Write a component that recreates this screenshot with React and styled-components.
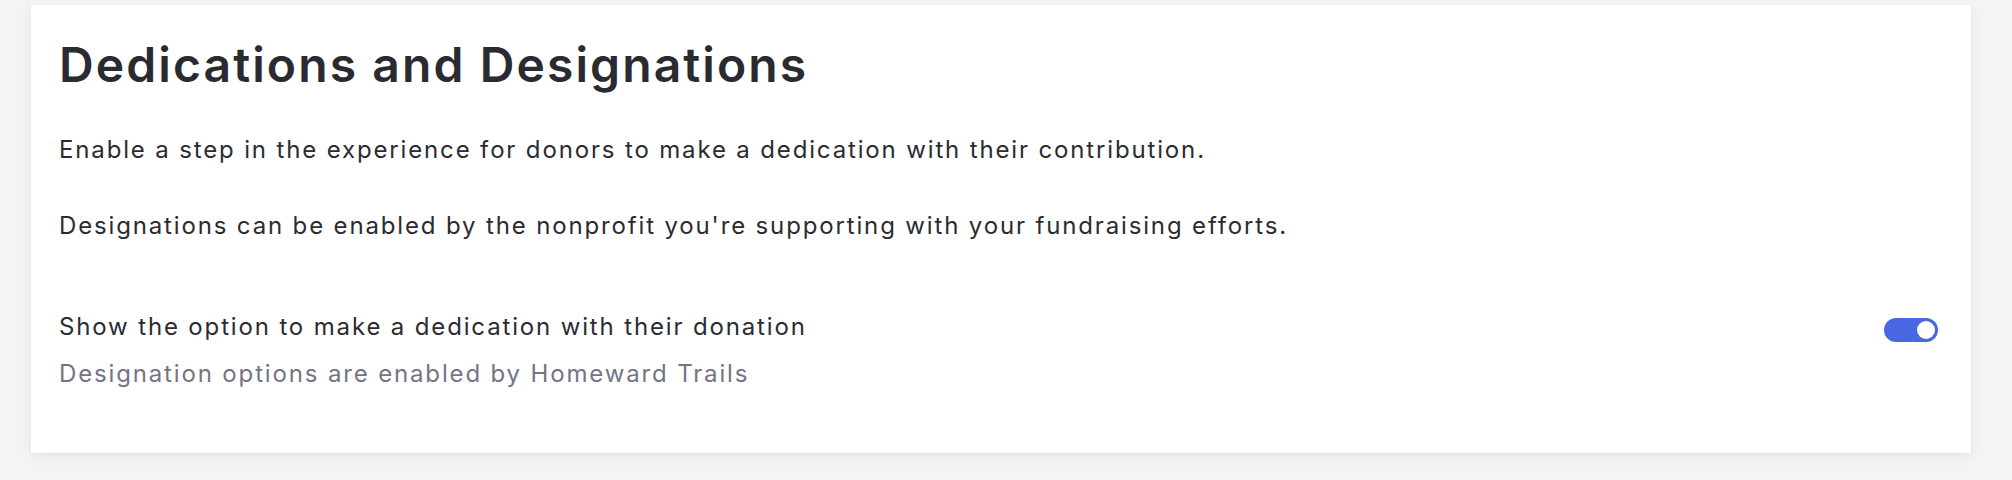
import React, { useState } from "react";
import styled, { createGlobalStyle } from "styled-components";

const GlobalStyle = createGlobalStyle`
  html, body {
    margin: 0;
    padding: 0;
    background: #f4f4f5;
  }
  body {
    font-family: "Inter", "Noto Sans", sans-serif;
    -webkit-font-smoothing: antialiased;
  }
`;

export const Page = styled.div`
  padding: 5px 41px 27px 31px;
`;

export const Card = styled.section`
  background: #fff;
  box-shadow: 0 4px 14px rgba(0, 0, 0, 0.06), 0 1px 3px rgba(0, 0, 0, 0.03);
  padding: 31px 33px 63px 28px;
`;

export const Title = styled.h2`
  margin: 0;
  font-size: 48px;
  line-height: 58px;
  font-weight: 600;
  letter-spacing: 2.1px;
  color: #2a2a31;
`;

export const Text = styled.p`
  margin: ${({ gap }) => gap || 0}px 0 0;
  font-size: 24px;
  line-height: 32px;
  font-weight: 400;
  letter-spacing: 1.85px;
  color: #2b2b33;
`;

export const OptionRow = styled.div`
  display: flex;
  justify-content: space-between;
  align-items: flex-start;
  margin-top: 69px;
`;

export const OptionText = styled.div`
  display: flex;
  flex-direction: column;
  gap: 15px;
`;

export const Hint = styled(Text)`
  color: #737585;
`;

export const Switch = styled.button`
  position: relative;
  width: 54px;
  height: 24px;
  margin-top: 7px;
  padding: 0;
  border: none;
  border-radius: 12px;
  background: ${({ on }) => (on ? "#4a67e3" : "#c9cad3")};
  cursor: pointer;
  flex-shrink: 0;
`;

export const Knob = styled.span`
  position: absolute;
  top: 3px;
  left: ${({ on }) => (on ? "33px" : "3px")};
  width: 18px;
  height: 18px;
  border-radius: 50%;
  background: #fff;
  transition: left 0.15s;
`;

function App() {
  const [on, setOn] = useState(true);

  return (
    <Page>
      <GlobalStyle />
      <Card>
        <Title>Dedications and Designations</Title>
        <Text gap={40}>
          Enable a step in the experience for donors to make a dedication with
          their contribution.
        </Text>
        <Text gap={44}>
          Designations can be enabled by the nonprofit you're supporting with
          your fundraising efforts.
        </Text>
        <OptionRow>
          <OptionText>
            <Text>Show the option to make a dedication with their donation</Text>
            <Hint>Designation options are enabled by Homeward Trails</Hint>
          </OptionText>
          <Switch on={on ? 1 : 0} onClick={() => setOn(!on)}>
            <Knob on={on ? 1 : 0} />
          </Switch>
        </OptionRow>
      </Card>
    </Page>
  );
}

export default App;
